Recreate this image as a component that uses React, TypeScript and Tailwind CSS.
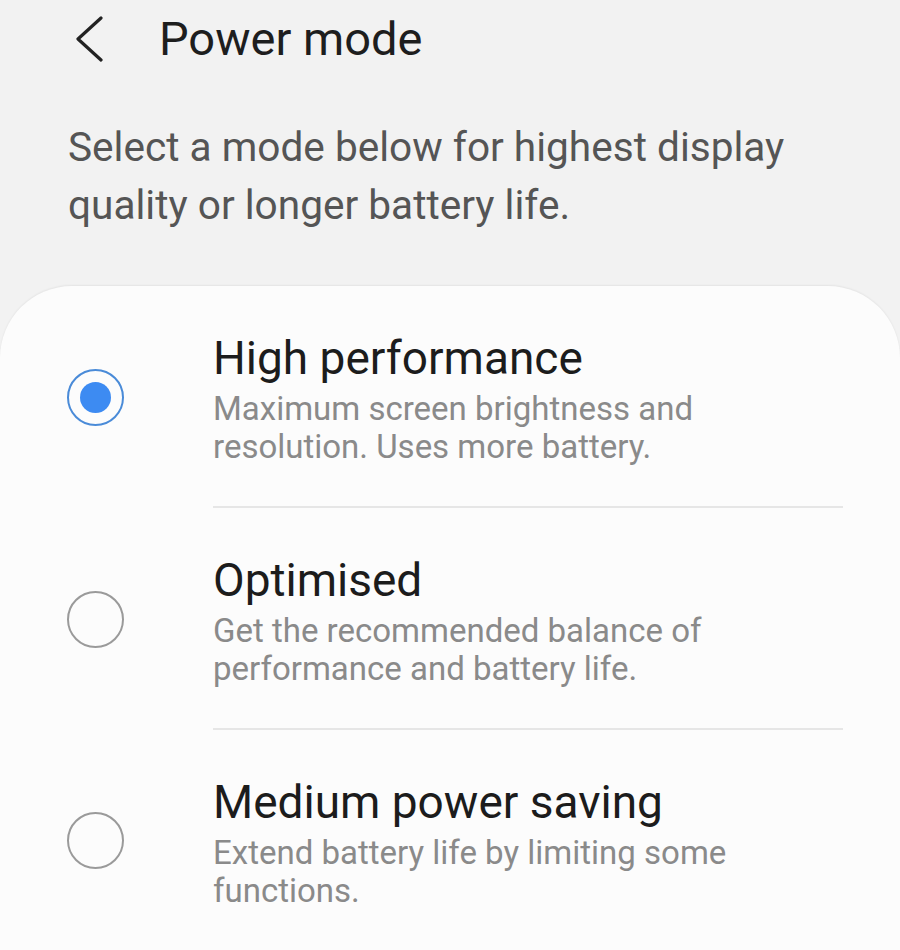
import React from "react";

const items = [
  {
    title: "High performance",
    sub: ["Maximum screen brightness and", "resolution. Uses more battery."],
    selected: true,
  },
  {
    title: "Optimised",
    sub: ["Get the recommended balance of", "performance and battery life."],
    selected: false,
  },
  {
    title: "Medium power saving",
    sub: ["Extend battery life by limiting some", "functions."],
    selected: false,
  },
];

function Radio({ selected }: { selected: boolean }) {
  return selected ? (
    <div className="w-[57px] h-[57px] rounded-full border-2 border-[#4a8bd8] flex items-center justify-center">
      <div className="w-[31px] h-[31px] rounded-full bg-[#3d8bf2]" />
    </div>
  ) : (
    <div className="w-[57px] h-[57px] rounded-full border-2 border-[#9a9a9a]" />
  );
}

export default function App() {
  return (
    <div
      className="w-[900px] h-[950px] bg-[#f2f2f2] overflow-hidden flex flex-col"
      style={{ fontFamily: "Roboto, 'Noto Sans', sans-serif" }}
    >
      <div className="flex items-center h-[78px] pl-[75px]">
        <svg width="28" height="46" viewBox="0 0 28 46" className="shrink-0">
          <path d="M26 2 L3 23 L26 44" fill="none" stroke="#222" strokeWidth="3.2" strokeLinecap="round" strokeLinejoin="round" />
        </svg>
        <div className="ml-[56px] text-[47px] leading-[56px] text-[#1e1e1e]">Power mode</div>
      </div>
      <div className="px-[68px] pt-[40px] text-[40.6px] leading-[58px] text-[#555555]">
        Select a mode below for highest display
        <br />
        quality or longer battery life.
      </div>
      <div className="mt-[52px] flex-1 bg-[#fcfcfc] rounded-t-[72px] shadow-[0_-1px_2px_rgba(0,0,0,0.06)]">
        {items.map((it, i) => (
          <div key={i} className="flex">
            <div className="w-[213px] shrink-0 flex items-center pl-[67px]">
              <Radio selected={it.selected} />
            </div>
            <div className="flex-1 pr-[57px]">
              <div className="pt-[46px] pb-[40px]">
                <div className="text-[46px] leading-[52px] text-[#1c1c1c]">{it.title}</div>
                <div className="mt-[6px] text-[33px] leading-[38px] text-[#8a8a8a]">
                  {it.sub[0]}
                  <br />
                  {it.sub[1]}
                </div>
              </div>
              {i < items.length - 1 && <div className="h-[2px] bg-[#e6e6e6]" />}
            </div>
          </div>
        ))}
      </div>
    </div>
  );
}
